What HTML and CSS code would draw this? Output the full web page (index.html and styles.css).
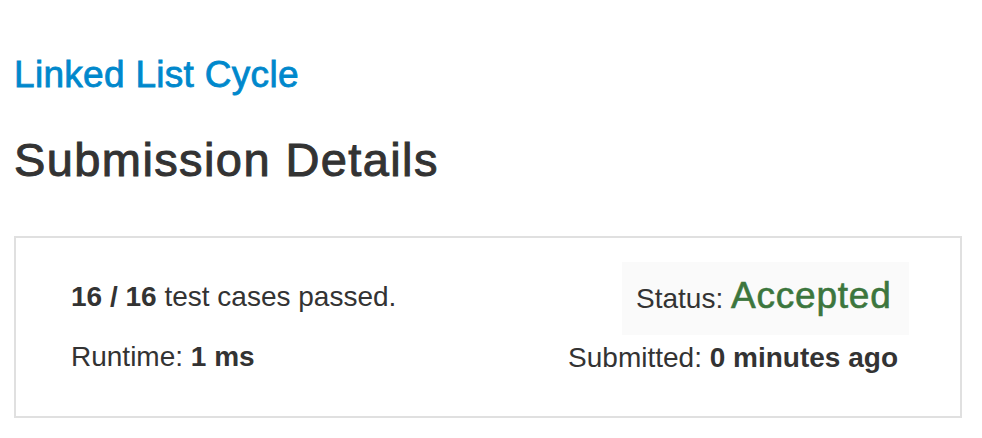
FILE: index.html
```html
<!DOCTYPE html>
<html lang="en">
<head>
<meta charset="utf-8">
<title>Submission Details</title>
<link rel="stylesheet" href="styles.css">
</head>
<body>
<div class="page">
  <a class="problem-link" href="#">Linked List Cycle</a>
  <h1 class="page-title">Submission Details</h1>
  <div class="panel">
    <div class="col-left">
      <div class="line"><strong>16 / 16</strong> test cases passed.</div>
      <div class="line">Runtime: <strong>1 ms</strong></div>
    </div>
    <div class="col-right">
      <div class="status-box">Status: <span class="accepted">Accepted</span></div>
      <div class="line submitted">Submitted: <strong>0 minutes ago</strong></div>
    </div>
  </div>
</div>
</body>
</html>
```

FILE: styles.css
```css
html, body {
  margin: 0;
  padding: 0;
  background: #ffffff;
}

body {
  font-family: "Liberation Sans", Arial, Helvetica, sans-serif;
  color: #333333;
}

.page {
  padding: 0 20px 0 14px;
}

.problem-link {
  display: block;
  margin-top: 54px;
  font-size: 37px;
  line-height: 41px;
  letter-spacing: 0.3px;
  color: #0088cc;
  text-decoration: none;
  -webkit-text-stroke: 0.8px #0088cc;
}

.page-title {
  margin: 39px 0 0 0;
  font-size: 47px;
  line-height: 52px;
  font-weight: normal;
  letter-spacing: 1.4px;
  color: #333333;
  -webkit-text-stroke: 1px #333333;
}

.panel {
  margin-top: 50px;
  border: 2px solid #e0e0e0;
  height: 182px;
  box-sizing: border-box;
  padding: 24px 51px 0 55px;
  display: flex;
  justify-content: space-between;
  align-items: flex-start;
}

.col-left {
  padding-top: 19px;
  display: flex;
  flex-direction: column;
  gap: 28px;
}

.line {
  font-size: 28px;
  line-height: 32px;
  white-space: nowrap;
}

.line strong {
  font-weight: bold;
}

.col-right {
  display: flex;
  flex-direction: column;
  align-items: flex-end;
  gap: 7px;
}

.status-box {
  width: 287px;
  box-sizing: border-box;
  padding-left: 14px;
  background: #fafafa;
  font-size: 28px;
  line-height: 73px;
  white-space: nowrap;
}

.accepted {
  font-size: 37px;
  line-height: 40px;
  letter-spacing: 0.8px;
  color: #3c763d;
  -webkit-text-stroke: 0.6px #3c763d;
}

.submitted {
  margin-right: 11px;
}
```
